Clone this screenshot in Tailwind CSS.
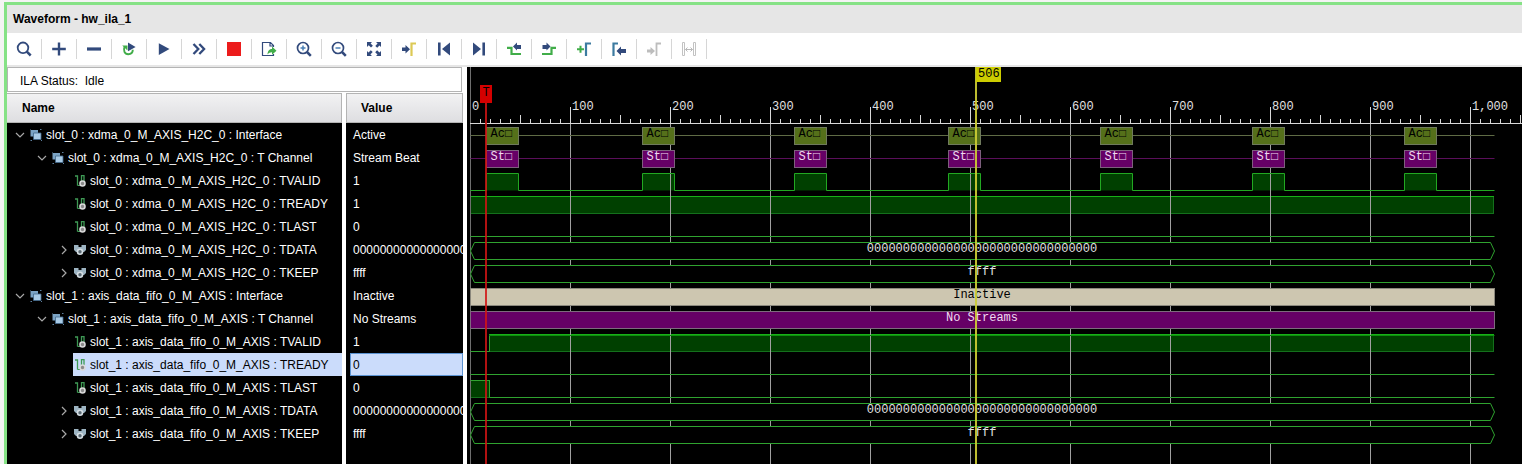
<!DOCTYPE html>
<html lang="en">
<head>
<meta charset="utf-8">
<title>Waveform - hw_ila_1</title>
<script src="https://cdn.jsdelivr.net/npm/@tailwindcss/browser@4"></script>
</head>
<body class="bg-[#f4f4f4] font-['Liberation_Sans',Arial,sans-serif] text-xs text-black">
<div class="flex h-screen flex-col overflow-hidden pt-0.5 pl-1">
 <main class="flex min-h-0 flex-1 flex-col border-t-3 border-l-3 border-[#86e286] bg-[#e6e6e6]">
  <header class="flex h-7 shrink-0 items-center px-1.5">
   <h1 class="text-xs font-bold">Waveform - hw_ila_1</h1>
  </header>
  <div id="toolbar" role="toolbar" aria-label="Waveform tools" class="flex h-8 shrink-0 items-center bg-white"></div>
  <div class="mt-0.5 flex min-h-0 flex-1 bg-white">
   <section class="flex w-[460px] shrink-0 flex-col">
    <div class="mr-[5px] flex h-[25px] shrink-0 items-center border border-[#b4b4b4] bg-white pl-3 pt-0.5 whitespace-pre">ILA Status:  Idle</div>
    <div class="mt-px flex min-h-0 flex-1 gap-1 pr-1">
     <div class="flex w-[335px] flex-col bg-black" role="tree" aria-label="Signals">
      <div class="flex h-[30px] shrink-0 items-center border border-l-0 border-[#b4b4b4] bg-linear-to-b from-[#f2f2f3] to-[#dedee1] pl-[15px] font-bold">Name</div>
      <div id="names"></div>
     </div>
     <div class="flex min-w-0 flex-1 flex-col overflow-hidden bg-black">
      <div class="flex h-[30px] shrink-0 items-center border border-[#b4b4b4] bg-linear-to-b from-[#f2f2f3] to-[#dedee1] pl-3.5 font-bold">Value</div>
      <div id="values"></div>
     </div>
    </div>
   </section>
   <section class="min-w-0 flex-1 overflow-hidden bg-black" aria-label="Waveform view">
    <svg id="wave" class="block h-full w-full font-['Liberation_Mono','Courier_New',monospace] text-xs"></svg>
   </section>
  </div>
 </main>
</div>
<script>
const N = '#324a7c', G = '#41ad49';
const plusArm = `<path d="M7 4.5v5M4.5 7h5" stroke="#4a7fb5" stroke-width="1.5"/>`;
const minusArm = `<path d="M4.5 7h5" stroke="#4a7fb5" stroke-width="1.5"/>`;
const lens = `<circle cx="7" cy="7" r="5.500" stroke="${N}" stroke-width="1.700" fill="none"/><path d="M11 11l3.800 3.800" stroke="${N}" stroke-width="2.500"/>`;
const tools = [
 ['Search', `<circle cx="7" cy="6.800" r="5.300" stroke="${N}" stroke-width="1.800" fill="none"/><path d="M10.800 10.600l3.900 3.900" stroke="${N}" stroke-width="2.500"/>`],
 ['Add', `<path d="M8 1.5v13M1.2 8h13.6" stroke="${N}" stroke-width="2.4"/>`],
 ['Remove', `<path d="M1 8h14" stroke="${N}" stroke-width="3.2"/>`],
 ['Run trigger', `<path d="M3.600 5.500C2 9.500 3.600 13.200 7.200 13.200c2.800 0 4.600-1.800 4.600-4.400" stroke="${G}" stroke-width="1.900" fill="none"/><path d="M1.200 4.500h5.300v5z" fill="${G}"/><path d="M7 1.500l7.600 4.500L7 10.200z" fill="${N}"/>`],
 ['Run', `<path d="M2.800 2.300L13.500 8 2.800 14z" fill="${N}"/>`],
 ['Run immediate', `<path d="M2.500 3l4.800 5-4.800 5M8.300 3l4.800 5-4.800 5" stroke="${N}" stroke-width="2.300" fill="none"/>`],
 ['Stop', `<path d="M1 1h14v14H1z" fill="#ec1c1c"/>`],
 ['Export', `<path d="M12.500 6V4.500L9.500 1.500h-8v13h11V13M9 1.500V5h3.500" stroke="${N}" stroke-width="1.200" fill="none"/><path d="M6.500 13.500c.3-4 2-5.500 4.500-5.500V5.500l4.500 4.300-4.500 4v-2.600c-2 0-3.300.7-4.500 2.300z" fill="${G}"/>`],
 ['Zoom in', lens + plusArm],
 ['Zoom out', lens + minusArm],
 ['Zoom fit', `<path d="M1 1h5L4.600 2.400l2.300 2.300-1.900 1.900-2.300-2.300L1 6zM15 1v5l-1.500-1.500-2.300 2.300-1.900-1.900 2.300-2.300L10 1zM1 15v-5l1.500 1.500 2.300-2.300 1.900 1.900-2.300 2.300L6 15zM15 15h-5l1.500-1.500-2.300-2.300 1.900-1.900 2.300 2.300L15 10z" fill="${N}"/>`],
 ['Go to cursor', `<path d="M1 6.500h3.500V4L9 8.300l-4.500 4.300V10H1z" fill="${N}"/><path d="M10.500 15V2.500H15" stroke="#dcc955" stroke-width="2.200" fill="none"/>`],
 ['Go to start', `<path d="M2 1.500h2.600v13H2zM14 1.500v13L6 8z" fill="${N}"/>`],
 ['Go to end', `<path d="M11.400 1.500H14v13h-2.600zM2 1.500v13L10 8z" fill="${N}"/>`],
 ['Previous transition', `<path d="M1 6.800h4.500V13H15" stroke="${G}" stroke-width="2.200" fill="none"/><path d="M7 5.500l4-4V4h4v4h-4v1.500z" fill="${N}"/>`],
 ['Next transition', `<path d="M1 13h9.500V6.800H15" stroke="${G}" stroke-width="2.200" fill="none"/><path d="M9.500 5.500l-4-4V4h-4v4h4v1.500z" fill="${N}"/>`],
 ['Add marker', `<path d="M1 8.200h7M4.500 4.700v7" stroke="${G}" stroke-width="2"/><path d="M10 15V2.500h5" stroke="#3c7ba0" stroke-width="2.200" fill="none"/>`],
 ['Previous marker', `<path d="M2.500 15V2.500H7" stroke="#3c7ba0" stroke-width="2.200" fill="none"/><path d="M5.500 10l4.500-4.500V8h5v4h-5v2.500z" fill="${N}"/>`],
 ['Next marker', `<path d="M1 8.500h3.500V6L9 10l-4.500 4V11.500H1z" fill="#bdbdbd"/><path d="M10.500 15V2.500H15" stroke="#bdbdbd" stroke-width="1.800" fill="none"/>`, 1],
 ['Swap cursors', `<path d="M1.500 1.500h2v13h-2zM12.500 1.500h2v13h-2z" fill="none" stroke="#c2c2c2"/><path d="M4.500 8.500h7M6.500 6.500l-2 2 2 2M9.500 6.500l2 2-2 2" stroke="#b8b8b8" fill="none"/>`, 1]
];
document.getElementById('toolbar').innerHTML = tools.map(([name, art, off]) =>
 `<button type="button" aria-label="${name}" class="flex h-5 w-[35px] items-center justify-center border-r border-[#d6d6d6]"${off ? ' disabled' : ''}><svg width="16" height="16" viewBox="0 0 16 16">${art}</svg></button>`).join('');

const A = 'slot_0 : xdma_0_M_AXIS_H2C_0 : ', B = 'slot_1 : axis_data_fifo_0_M_AXIS : ', Z = '0'.repeat(32);
const rows = [
 [0, A + 'Interface', 'Active'], [1, A + 'T Channel', 'Stream Beat'],
 [2, A + 'TVALID', '1'], [2, A + 'TREADY', '1'], [2, A + 'TLAST', '0'],
 [3, A + 'TDATA', Z], [3, A + 'TKEEP', 'ffff'],
 [0, B + 'Interface', 'Inactive'], [1, B + 'T Channel', 'No Streams'],
 [2, B + 'TVALID', '1'], [2, B + 'TREADY', '0', 1], [2, B + 'TLAST', '0'],
 [3, B + 'TDATA', Z], [3, B + 'TKEEP', 'ffff']
];
const down = `<svg width="10" height="10" viewBox="0 0 10 10"><path d="M1 3l4 4 4-4" stroke="#a8a8a8" stroke-width="1.200" fill="none"/></svg>`;
const right = `<svg width="10" height="10" viewBox="0 0 10 10"><path d="M3 1l4 4-4 4" stroke="#a8a8a8" stroke-width="1.200" fill="none"/></svg>`;
const iface = `<svg width="12" height="12" viewBox="0 0 12 12"><path d="M.5 1h7.500v6.500H.5z" fill="#7ba3c4"/><path d="M3.500 4h7.500v6.500H3.500z" fill="#a9cbe6" stroke="#41688c" stroke-width=".8"/><path d="M0 0h1M10 .5h1.500M.5 11.500H2M11 11.500h1" stroke="#5d7f9d"/></svg>`;
const wire = `<svg width="12" height="12" viewBox="0 0 12 12"><path d="M0 1h2.500v9.500M6.500 8V.700h2.500V6" stroke="#3f9a55" stroke-width="1.300" fill="none"/><path d="M2.500 10.500H6" stroke="#3f9a55"/><circle cx="7.500" cy="8.500" r="2.500" fill="#8a8a8a" stroke="#d9d9d9" stroke-width="1.600"/></svg>`;
const bus = `<svg width="12" height="12" viewBox="0 0 12 12"><path d="M0 1h4.500v2h3V1H12v5l-2 2H2L0 6z" fill="#9db4c2"/><circle cx="6" cy="7.700" r="2.500" fill="#5b6a74" stroke="#d5dde2" stroke-width="1.600"/></svg>`;
const twist = ['pl-2', 'pl-[30px]', '', 'pl-[52px]'];
document.getElementById('names').innerHTML = rows.map(([k, name, , sel]) => k === 2
 ? `<div role="treeitem" class="flex h-[23px] pl-[66px]"><div class="flex flex-1 items-center gap-[3px] pl-0.5 whitespace-nowrap ${sel ? 'bg-[#cbdcfb] text-black' : 'text-white'}">${wire}<span>${name}</span></div></div>`
 : `<div role="treeitem" class="flex h-[23px] items-center whitespace-nowrap text-white ${twist[k]}"><button type="button" aria-label="Toggle ${name}" class="mr-[5px]">${k === 3 ? right : down}</button>${k === 3 ? bus : iface}<span class="pl-1">${name}</span></div>`).join('');
document.getElementById('values').innerHTML = rows.map(([, , v, sel]) =>
 `<div class="flex h-[23px] pl-1"><div class="flex flex-1 items-center pl-[3px] whitespace-nowrap ${sel ? 'bg-[#cbdcfb] text-black shadow-[inset_0_0_0_1px_#5c93d1]' : 'text-white'}">${v}</div></div>`).join('');

/* One sample is one pixel wide; sample 0 starts at X0 and each signal row is 23 high. */
const X0 = 3.5, END = 1027.5, LINE = '#2fa32f';
const top_ = i => 60.5 + 23 * i, bot = i => 77.5 + 23 * i, mid = i => 68.5 + 23 * i, base = i => 70 + 23 * i;
const line = (x1, y1, x2, y2, c) => `<path d="M${x1} ${y1}L${x2} ${y2}" stroke="${c}"/>`;
const text = (x, y, s, c, a = 'start') => `<text x="${x}" y="${y}" fill="${c}" text-anchor="${a}">${s}</text>`;
const box = (x, i, w, f, s) => `<rect x="${x}" y="${top_(i)}" width="${w}" height="17" fill="${f}" stroke="${s}"/>`;
const beats = [19.5, 175.5, 327.5, 481.5, 633.5, 785.5, 937.5];
let o = '';
const high = (a, b, i) => `<rect x="${a}" y="${top_(i)}" width="${b - a}" height="17" fill="#004000" stroke="#14701c"/>` + line(a - .5, top_(i), b + .5, top_(i), '#18b018');
o += high(X0, END - 1, 3) + high(22.5, END - 1, 9) + high(X0, 22.5, 11);
for (const b of beats) o += `<rect x="${b}" y="${top_(2)}" width="32" height="17" fill="#004000"/>`;
for (let k = 0; k <= 10; k++) o += `<line x1="${X0 + 100 * k}" x2="${X0 + 100 * k}" y1="${k ? 40 : 0}" y2="100%" stroke="${k ? '#a0a0a0' : '#6e6e6e'}"/>`;
o += `<line x1="3" x2="100%" y1="56.5" y2="56.5" stroke="#d8d8d8"/>`;
for (let s = 10; s <= 1050; s += 10) o += line(X0 + s, s % 100 ? (s % 50 ? 52 : 48) : 40, X0 + s, 57, '#d8d8d8');
for (let k = 0; k <= 10; k++) o += text(5 + 100 * k, 43, (100 * k).toLocaleString('en-US'), '#e0e0e0');
o += line(X0, mid(0), END, mid(0), '#5f6b45') + line(X0, mid(1), END, mid(1), '#5a0f5a');
for (const b of beats) {
 o += box(b, 0, 32, '#55701a', '#6f7a5c') + text(b + 4, base(0), 'Ac□', '#000');
 o += box(b, 1, 32, '#660066', '#7d5f7d') + text(b + 4, base(1), 'St□', '#f0d8f0');
}
o += `<path d="M${X0} ${bot(2)}${beats.map(b => `H${b}V${top_(2)}H${b + 32}V${bot(2)}`).join('')}H${END}" fill="none" stroke="#22a822"/>`;
o += line(X0, bot(4), END, bot(4), LINE) + line(X0, bot(10), END, bot(10), LINE);
o += `<path d="M${X0} ${bot(9)}H22.5V${top_(9)}M${X0} ${top_(11)}H22.5V${bot(11)}H${END}" fill="none" stroke="${LINE}"/>`;
o += line(22, 268.5, END, 268.5, '#0c900c');
for (const [i, s] of [[5, Z], [6, 'ffff'], [12, Z], [13, 'ffff']])
 o += `<path d="M${X0} ${mid(i) + .5}L7.5 ${top_(i)}H1023.5L${END} ${mid(i) + .5}L1023.5 ${bot(i)}H7.5Z" fill="#000" stroke="${LINE}"/>` + text(515, base(i), s, '#e0e0e0', 'middle');
o += box(X0, 7, 1024, '#cdc6b0', '#8a877c') + text(515, base(7), 'Inactive', '#000', 'middle');
o += box(X0, 8, 1024, '#660066', '#7d6a7d') + text(515, base(8), 'No Streams', '#f0d8f0', 'middle');
o += `<rect x="18" y="18" width="2" height="100%" fill="#d01414" fill-opacity=".85"/><rect x="13" y="18" width="12" height="18" fill="#d40000"/>` + text(19, 29, 'T', '#000', 'middle');
o += `<rect x="508" y="0" width="2" height="100%" fill="#cccc33" fill-opacity=".92"/><rect x="509" y="0" width="25" height="15" fill="#cccc00"/>` + text(511, 10, '506', '#000');
document.getElementById('wave').innerHTML = o;
</script>
</body>
</html>
